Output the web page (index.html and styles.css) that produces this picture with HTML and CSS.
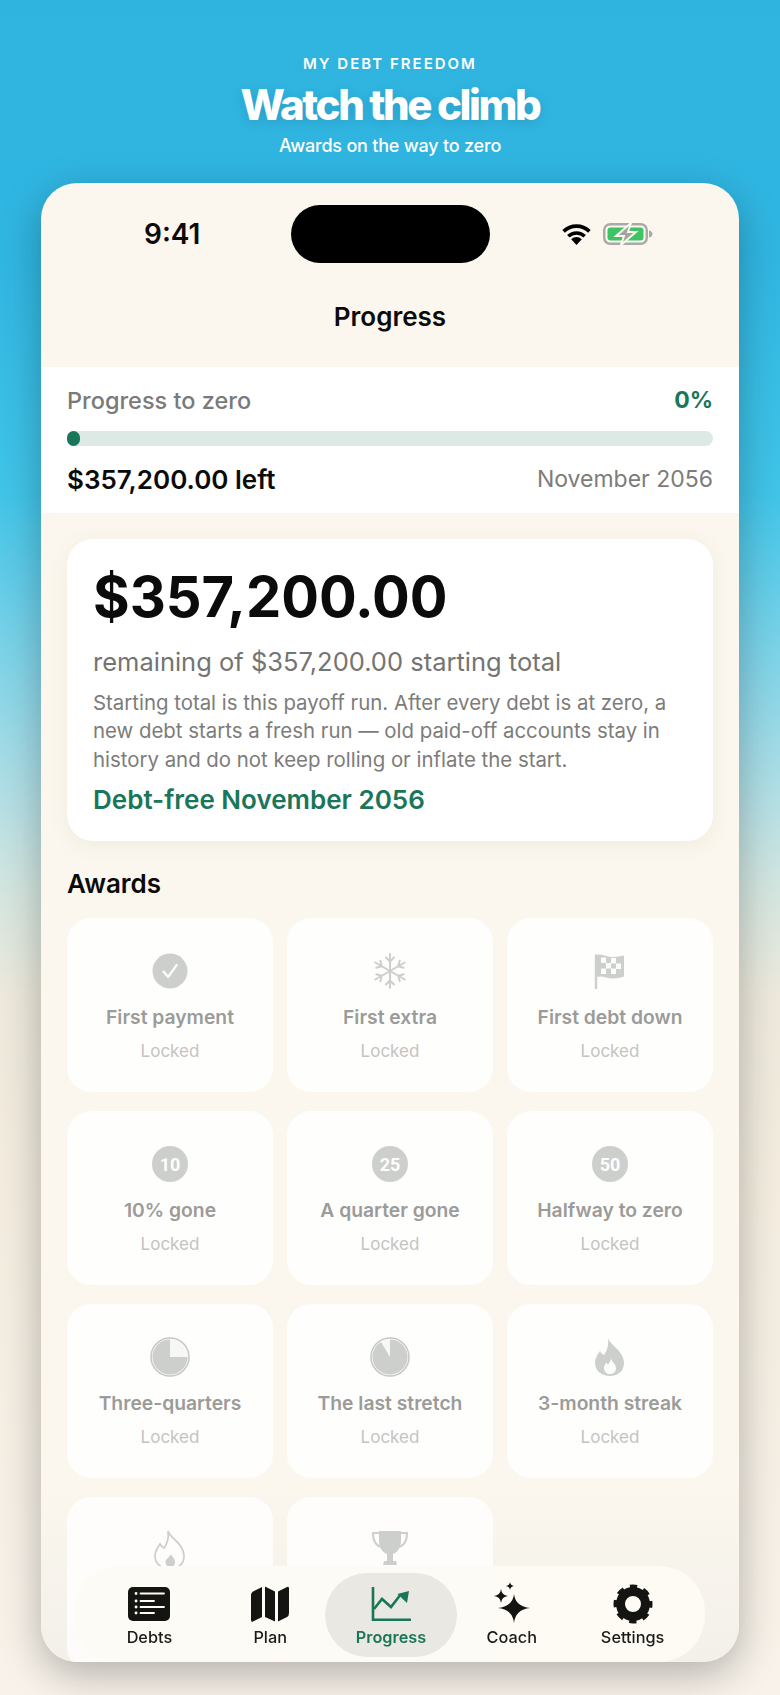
FILE: index.html
```html
<!DOCTYPE html>
<html lang="en">
<head>
    <meta charset="UTF-8">
    <meta name="viewport" content="width=device-width, initial-scale=1.0">
    <title>Watch the climb</title>
    <link rel="stylesheet" href="styles.css">
</head>
<body>
    <!-- Marketing header above the phone -->
    <header class="promo">
        <p class="eyebrow">MY DEBT FREEDOM</p>
        <h1>Watch the climb</h1>
        <p class="tagline">Awards on the way to zero</p>
    </header>

    <main class="phone">
        <div class="status-bar">
            <span class="clock">9:41</span>
            <span class="island"></span>
            <span class="status-icons">
                <svg class="wifi" viewBox="0 0 31 21"><path d="M15.500 21l-5.300-5.700a7.500 7.500 0 0 1 10.600 0z"/><path d="M7.300 12.300a11.800 11.800 0 0 1 16.400 0M2.600 7.400a18.500 18.500 0 0 1 25.800 0" fill="none" stroke="#000" stroke-width="3.600"/></svg>
                <svg class="battery" viewBox="0 0 50 22">
                    <rect x="1.200" y="1.200" width="42.600" height="19.600" rx="6" fill="none" stroke="#a9a9a5" stroke-width="2.400"/>
                    <rect x="4.500" y="4.500" width="36" height="13" rx="3" fill="#3ec464"/>
                    <path d="M46 7.500c2.500.5 3.500 2 3.500 3.500s-1 3-3.500 3.500z" fill="#a9a9a5"/>
                    <path d="M28 0L13 13h8l-3 9 15-13h-8z" fill="#a3a39f" stroke="#fbf6ee" stroke-width="2"/>
                </svg>
            </span>
        </div>

        <h2 class="nav-title">Progress</h2>

        <!-- Progress band -->
        <section class="band">
            <div class="band-row">
                <span class="band-label">Progress to zero</span>
                <span class="band-percent">0%</span>
            </div>
            <div class="bar"><div class="bar-fill"></div></div>
            <div class="band-row">
                <span class="band-left">$357,200.00 left</span>
                <span class="band-date">November 2056</span>
            </div>
        </section>

        <div class="content">
            <section class="summary">
                <div class="summary-amount">$357,200.00</div>
                <div class="summary-sub">remaining of $357,200.00 starting total</div>
                <p class="summary-note">Starting total is this payoff run. After every debt is at zero, a new debt starts a fresh run — old paid-off accounts stay in history and do not keep rolling or inflate the start.</p>
                <div class="summary-date">Debt-free November 2056</div>
            </section>

            <h3 class="section-title">Awards</h3>

            <div class="awards">
                <div class="award">
                    <svg class="award-icon" viewBox="0 0 36 36"><circle cx="18" cy="18" r="17.500" fill="#cdcfcd"/><path d="M11.500 18.500l4.600 5.500 8.600-12" fill="none" stroke="#fdfdfb" stroke-width="2.200" stroke-linecap="round" stroke-linejoin="round"/></svg>
                    <div class="award-name">First payment</div>
                    <div class="award-state">Locked</div>
                </div>
                <div class="award">
                    <svg class="award-icon" viewBox="0 0 36 36" fill="none" stroke="#cdcfcd" stroke-width="2" stroke-linecap="round"><path d="M18 1v34M14 4.500l4 4 4-4M14 31.500l4-4 4 4"/><path d="M18 1v34M14 4.500l4 4 4-4M14 31.500l4-4 4 4" transform="rotate(60 18 18)"/><path d="M18 1v34M14 4.500l4 4 4-4M14 31.500l4-4 4 4" transform="rotate(120 18 18)"/></svg>
                    <div class="award-name">First extra</div>
                    <div class="award-state">Locked</div>
                </div>
                <div class="award">
                    <svg class="award-icon" viewBox="0 0 36 36"><path d="M4 2.500v33" stroke="#cdcfcd" stroke-width="2.400" stroke-linecap="round"/><path d="M4 2c6-2 11 2 16 2 4 0 8-.7 12-1.500v21c-4 1.500-8 2-12 2-5 0-10-3.500-16-1.500z" fill="#cdcfcd"/><path d="M9 4.500h5v5.500H9zM19 5h5v5.500h-5zM14 10h5v5.500h-5zM24 10.500h5v5.500h-5zM9 15.500h5V21H9zM19 15.500h5V21h-5z" fill="#fdfdfb"/></svg>
                    <div class="award-name">First debt down</div>
                    <div class="award-state">Locked</div>
                </div>

                <div class="award">
                    <div class="badge">10</div>
                    <div class="award-name">10% gone</div>
                    <div class="award-state">Locked</div>
                </div>
                <div class="award">
                    <div class="badge">25</div>
                    <div class="award-name">A quarter gone</div>
                    <div class="award-state">Locked</div>
                </div>
                <div class="award">
                    <div class="badge">50</div>
                    <div class="award-name">Halfway to zero</div>
                    <div class="award-state">Locked</div>
                </div>

                <div class="award">
                    <svg class="award-icon pie" viewBox="0 0 40 40"><circle cx="20" cy="20" r="19" fill="#f7f7f5" stroke="#c6c8c6" stroke-width="1.500"/><path d="M20 20V2.500A17.500 17.500 0 1 0 37.500 20z" fill="#cdcfcd"/></svg>
                    <div class="award-name">Three-quarters</div>
                    <div class="award-state">Locked</div>
                </div>
                <div class="award">
                    <svg class="award-icon pie" viewBox="0 0 40 40"><circle cx="20" cy="20" r="19" fill="#f7f7f5" stroke="#c6c8c6" stroke-width="1.500"/><path d="M20 20L20 2.500A17.500 17.500 0 1 1 11 5z" fill="#cdcfcd"/></svg>
                    <div class="award-name">The last stretch</div>
                    <div class="award-state">Locked</div>
                </div>
                <div class="award">
                    <svg class="award-icon pie" viewBox="0 0 40 40"><path d="M18 1c2 7 16 13 16 25 0 8-6 13-14 13S5 34 5 26c0-5 3-9 5-12 1 2 2 3 4 4 3-4 5-10 4-17z" fill="#cdcfcd"/><path d="M21 21c0 3 5 6 5 10 0 4-3 6-6 6s-6-2-6-6c0-2 1-4 2.500-5.500.5 1 1 1.500 1.500 2 1.500-2 3-4 3-6.500z" fill="#fdfdfb"/></svg>
                    <div class="award-name">3-month streak</div>
                    <div class="award-state">Locked</div>
                </div>

                <!-- Last row runs under the tab bar, only the icons show -->
                <div class="award">
                    <svg class="award-icon pie" viewBox="0 0 40 40" fill="none" stroke="#cdcfcd" stroke-width="1.800"><path d="M18 1c2 7 16 13 16 25 0 8-6 13-14 13S5 34 5 26c0-5 3-9 5-12 1 2 2 3 4 4 3-4 5-10 4-17z"/><path d="M21 24c0 2 4 4 4 8 0 3-2 5-4.500 5s-5-2-5-5c0-3 3.500-4 5.500-8z" fill="#cdcfcd" stroke="none"/></svg>
                </div>
                <div class="award">
                    <svg class="award-icon pie" viewBox="0 0 40 40"><path d="M9 3H3c0 8 3 13 9 14M31 3h6c0 8-3 13-9 14" fill="none" stroke="#cdcfcd" stroke-width="2"/><path d="M9 1h22v10c0 8-5 12-8 13v7h3l1 4H13l1-4h3v-7c-3-1-8-5-8-13z" fill="#cdcfcd"/></svg>
                </div>
            </div>
        </div>

        <!-- Floating tab bar, sits over the awards -->
        <nav class="tabs">
            <div class="tab">
                <svg class="tab-icon" viewBox="0 0 44 44"><rect x="1" y="5" width="42" height="34" rx="5" fill="#141412"/><g stroke="#fdfbf4" stroke-width="1.800" stroke-linecap="round"><path d="M13.500 11.500H37M13.500 19H27M13.500 25H37M13.500 31H27"/><path d="M9 11.500h.1M9 19h.1M9 25h.1M9 31h.1" stroke-width="2.800"/></g></svg>
                <span>Debts</span>
            </div>
            <div class="tab">
                <svg class="tab-icon" viewBox="0 0 44 44" fill="#141412"><path d="M14 5L5 9.500Q3 10.500 3 13V38Q3 40.500 5 39.500L14 35zM17 4.500L27 9.500V39.500L17 35zM30 9.500L39 5Q41 4 41 6.500V31Q41 34 39 35L30 39.500z"/></svg>
                <span>Plan</span>
            </div>
            <div class="tab tab-active">
                <svg class="tab-icon" viewBox="0 0 44 44" fill="none" stroke="#1a7658" stroke-width="2.600"><path d="M4 5V37.800H42"/><path d="M5 27l8-10 9 8 10-13"/><path d="M28.500 12l11.500-3-2 12z" fill="#1a7658" stroke="none"/></svg>
                <span>Progress</span>
            </div>
            <div class="tab">
                <svg class="tab-icon" viewBox="0 0 44 44" fill="#141412"><path d="M24 12Q25.500 24.500 40 26 25.500 27.500 24 41 22.500 27.500 8 26 22.500 24.500 24 12zM11 7Q11.700 13.300 18 14 11.700 14.700 11 21 10.300 14.700 4 14 10.300 13.300 11 7zM20 0Q20.400 3.600 24 4 20.400 4.400 20 8 19.600 4.400 16 4 19.600 3.600 20 0z"/></svg>
                <span>Coach</span>
            </div>
            <div class="tab">
                <svg class="tab-icon" viewBox="0 0 44 44" fill="none" stroke="#141412"><circle cx="22" cy="22" r="12.500" stroke-width="9"/><circle cx="22" cy="22" r="17" stroke-width="5" stroke-dasharray="7 6.350" stroke-dashoffset="3.500"/></svg>
                <span>Settings</span>
            </div>
        </nav>
    </main>
</body>
</html>
```

FILE: styles.css
```css
* {
    box-sizing: border-box;
}
html, body {
    height: 1695px;
    overflow: hidden;
}
body {
    margin: 0;
    font-family: Inter, "Noto Sans", sans-serif;
    background: linear-gradient(180deg, #2fb3df 0%, #30b6e2 15%, #40c4e8 29%, #6dcfe8 36%, #a6dce6 45%, #d2e5e0 52%, #eee9dc 59%, #f3ecdf 70%, #f8f2ea 100%);
    color: #0b0b0b;
}

.promo {
    height: 183px;
    padding-top: 55px;
    text-align: center;
    color: #fff;
}
.eyebrow {
    margin: 0;
    font-size: 15px;
    line-height: 18px;
    font-weight: 600;
    letter-spacing: 2px;
}
h1 {
    margin: 3px 0 0;
    font-size: 42px;
    line-height: 58px;
    font-weight: 800;
    letter-spacing: -2.400px;
    text-shadow: 0 3px 12px rgba(0, 0, 0, 0.12);
}
.tagline {
    margin: 0;
    font-size: 18px;
    line-height: 24px;
    font-weight: 500;
    letter-spacing: -0.200px;
}

.phone {
    position: relative;
    width: 698px;
    height: 1479px;
    margin-left: 41px;
    border-radius: 36px;
    overflow: hidden;
    background: linear-gradient(180deg, #fbf7ee 0%, #fbf7ee 88%, #f3f0ea 100%);
    box-shadow: 0 12px 40px rgba(0, 0, 0, 0.28);
}

.status-bar {
    display: grid;
    grid-template-columns: 1fr 199px 1fr;
    align-items: center;
    padding-top: 22px;
}
.clock {
    padding-left: 103px;
    font-size: 28px;
    font-weight: 600;
}
.island {
    height: 58px;
    border-radius: 29px;
    background-color: #000;
}
.status-icons {
    display: flex;
    align-items: center;
    gap: 11px;
    padding-left: 71px;
}
.wifi {
    width: 31px;
    height: 21px;
}
.battery {
    width: 50px;
    height: 22px;
}

.nav-title {
    margin: 0;
    height: 104px;
    padding-top: 38px;
    text-align: center;
    font-size: 26px;
    line-height: 32px;
    font-weight: 600;
}

.band {
    height: 146px;
    padding: 19px 26px 0;
    background-color: #fff;
}
.band-row {
    display: flex;
    justify-content: space-between;
    align-items: center;
    height: 28px;
}
.band-label {
    font-size: 23.500px;
    font-weight: 500;
    color: #7a7a78;
}
.band-percent {
    font-size: 23px;
    font-weight: 700;
    color: #1a7658;
}
.bar {
    height: 15px;
    margin: 17px 0 19px;
    border-radius: 8px;
    background-color: #dde9e4;
}
.bar-fill {
    width: 13px;
    height: 15px;
    border-radius: 7px;
    background-color: #1a7658;
}
.band-left {
    font-size: 26px;
    font-weight: 600;
}
.band-date {
    font-size: 23px;
    color: #7c7c7a;
}

.content {
    padding: 26px 26px 0;
}
.summary {
    height: 302px;
    padding: 26px 26px 0;
    border-radius: 26px;
    background-color: #fff;
    box-shadow: 0 4px 20px rgba(120, 100, 70, 0.08);
}
.summary-amount {
    font-size: 56px;
    line-height: 64px;
    font-weight: 700;
}
.summary-sub {
    margin-top: 17px;
    font-size: 25.500px;
    line-height: 32px;
    color: #747472;
}
.summary-note {
    margin: 10.600px 0 0;
    font-size: 20.400px;
    line-height: 28.700px;
    color: #7c7c7a;
}
.summary-date {
    margin-top: 8px;
    font-size: 26px;
    line-height: 34px;
    font-weight: 600;
    color: #1a7658;
}

.section-title {
    margin: 27px 0 18px;
    font-size: 26px;
    line-height: 32px;
    font-weight: 600;
}

.awards {
    display: grid;
    grid-template-columns: repeat(3, 1fr);
    grid-auto-rows: 174px;
    gap: 19px 14px;
}
.award {
    display: flex;
    flex-direction: column;
    align-items: center;
    padding-top: 35px;
    border-radius: 24px;
    background-color: rgba(255, 255, 255, 0.8);
}
.award-icon {
    width: 36px;
    height: 36px;
}
.award-icon.pie {
    width: 40px;
    height: 40px;
    margin: -2px 0;
}
.badge {
    display: flex;
    justify-content: center;
    align-items: center;
    width: 36px;
    height: 36px;
    border-radius: 50%;
    background-color: #cdcfcd;
    color: #fdfdfb;
    font-family: Roboto, sans-serif;
    font-size: 18px;
    font-weight: 700;
}
.award-name {
    margin-top: 16px;
    font-size: 19.300px;
    line-height: 24px;
    font-weight: 600;
    color: #9b9b99;
}
.award-state {
    margin-top: 10px;
    font-size: 17px;
    line-height: 24px;
    color: #c4c4c2;
}

.tabs {
    position: absolute;
    left: 33px;
    right: 34px;
    bottom: 0;
    height: 96px;
    display: grid;
    grid-template-columns: repeat(5, 1fr);
    padding: 7px 12px 5px 15px;
    border-radius: 46px;
    background-color: rgba(253, 251, 244, 0.95);
    backdrop-filter: blur(6px);
}
.tab {
    display: flex;
    flex-direction: column;
    align-items: center;
    gap: 1px;
    height: 84px;
    padding-top: 9px;
    font-size: 16.300px;
    line-height: 20px;
    font-weight: 500;
    color: #1b1b19;
}
.tab-active {
    margin: 0 -6px;
    border-radius: 42px;
    background-color: #e9e8e3;
    color: #1a7658;
    font-weight: 600;
}
.tab-icon {
    width: 44px;
    height: 44px;
}
```
